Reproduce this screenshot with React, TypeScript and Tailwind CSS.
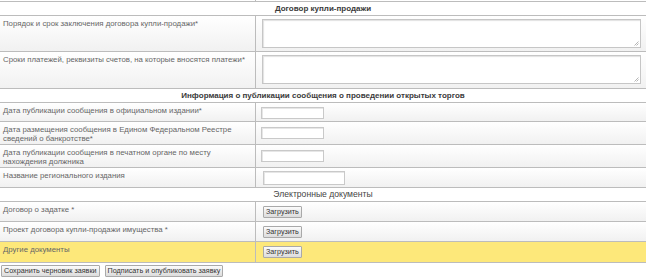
import React from "react";

const font = { fontFamily: '"Liberation Sans", Arial, sans-serif' };

function Header({ children, bold = true }: { children: React.ReactNode; bold?: boolean }) {
  return (
    <div
      className={`h-[14px] bg-white border-b border-[#bcbcbc] flex items-center justify-center leading-none whitespace-nowrap ${
        bold ? "font-bold text-[#3a3a3a] text-[8px]" : "text-[#444] text-[8.6px]"
      }`}
    >
      {children}
    </div>
  );
}

function Row({
  label,
  h,
  children,
  yellow = false,
}: {
  label: React.ReactNode;
  h: string;
  children: React.ReactNode;
  yellow?: boolean;
}) {
  return (
    <div
      className={`grid grid-cols-[256px_1fr] border-b border-[#bcbcbc] ${h} ${
        yellow ? "bg-[#fde87a]" : "bg-gradient-to-b from-white to-[#f1f1f1]"
      }`}
    >
      <div className="border-r border-[#bcbcbc] pl-[3px] pt-[3px] text-[7.8px] leading-[9px] text-[#666] whitespace-nowrap overflow-hidden">
        {label}
      </div>
      <div className="pl-[5px]">{children}</div>
    </div>
  );
}

function Input({ w = "w-[63px]", h = "h-[12px]", mt = "mt-[4px]" }: { w?: string; h?: string; mt?: string }) {
  return <div className={`${w} ${h} ${mt} bg-white border border-[#c9c9c9] shadow-[inset_1px_1px_0_#e6e6e6]`} />;
}

function TextArea() {
  return (
    <div className="relative mt-[3px] ml-[1px] w-[379px] h-[29px] bg-white border border-[#c6c6c6] shadow-[inset_1px_1px_1px_#e2e2e2]">
      <svg className="absolute right-[1px] bottom-[1px]" width="5" height="5" viewBox="0 0 5 5">
        <path d="M4.5 0.5 L0.5 4.5 M4.5 2.5 L2.5 4.5" stroke="#b5b5b5" strokeWidth="1" />
      </svg>
    </div>
  );
}

function Btn({ children, className = "" }: { children: React.ReactNode; className?: string }) {
  return (
    <div
      className={`h-[12px] px-[2px] flex items-center justify-center border border-[#a9a9a9] rounded-[1px] bg-gradient-to-b from-[#fbfbfb] to-[#dcdcdc] text-[7.2px] leading-none text-[#333] whitespace-nowrap ${className}`}
    >
      {children}
    </div>
  );
}

export default function App() {
  return (
    <div className="w-[646px] h-[280px] bg-white overflow-hidden" style={font}>
      <div className="grid grid-cols-[256px_1fr] h-[2px] border-b border-[#bcbcbc]">
        <div className="border-r border-[#bcbcbc]" />
        <div />
      </div>
      <Header>Договор купли-продажи</Header>
      <Row h="h-[36px]" label="Порядок и срок заключения договора купли-продажи*">
        <TextArea />
      </Row>
      <Row h="h-[37px]" label="Сроки платежей, реквизиты счетов, на которые вносятся платежи*">
        <TextArea />
      </Row>
      <Header>Информация о публикации сообщения о проведении открытых торгов</Header>
      <Row h="h-[19px]" label="Дата публикации сообщения в официальном издании*">
        <Input />
      </Row>
      <Row
        h="h-[23px]"
        label={
          <>
            Дата размещения сообщения в Едином Федеральном Реестре
            <br />
            сведений о банкротстве*
          </>
        }
      >
        <Input mt="mt-[5px]" />
      </Row>
      <Row
        h="h-[23px]"
        label={
          <>
            Дата публикации сообщения в печатном органе по месту
            <br />
            нахождения должника
          </>
        }
      >
        <Input mt="mt-[5px]" />
      </Row>
      <Row h="h-[20px]" label="Название регионального издания">
        <div className="pl-[2px]">
          <Input w="w-[82px]" h="h-[14px]" mt="mt-[3px]" />
        </div>
      </Row>
      <Header bold={false}>Электронные документы</Header>
      <Row h="h-[20px]" label="Договор о задатке *">
        <div className="pl-[2px] pt-[4px] flex">
          <Btn>Загрузить</Btn>
        </div>
      </Row>
      <Row h="h-[20px]" label="Проект договора купли-продажи имущества *">
        <div className="pl-[2px] pt-[4px] flex">
          <Btn>Загрузить</Btn>
        </div>
      </Row>
      <Row h="h-[21px]" yellow label="Другие документы">
        <div className="pl-[2px] pt-[4px] flex">
          <Btn>Загрузить</Btn>
        </div>
      </Row>
      <div className="flex gap-[5px] pl-[1px] pt-[2px]">
        <Btn>Сохранить черновик заявки</Btn>
        <Btn>Подписать и опубликовать заявку</Btn>
      </div>
    </div>
  );
}
